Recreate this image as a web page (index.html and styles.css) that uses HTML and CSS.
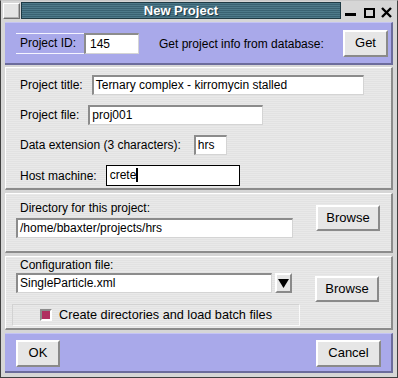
FILE: index.html
```html
<!DOCTYPE html>
<html lang="en">
<head>
    <meta charset="UTF-8">
    <title>New Project</title>
    <link rel="stylesheet" href="styles.css">
</head>
<body>
    <div class="window">
        <div class="titlebar">
            <div class="tb-icon"></div>
            <div class="tb-title">New Project</div>
            <svg class="tb-controls" width="54" height="18" viewBox="0 0 54 18">
                <rect x="4" y="11" width="11" height="3" fill="#000"/>
                <rect x="24" y="7" width="9" height="8" fill="none" stroke="#000" stroke-width="2"/>
                <path d="M41 6 L50 15 M50 6 L41 15" stroke="#000" stroke-width="2.4"/>
            </svg>
        </div>

        <div class="panel panel-top">
            <span class="id-label">Project ID:</span>
            <div class="field w-id">145</div>
            <span class="get-text">Get project info from database:</span>
            <div class="spacer"></div>
            <div class="btn w-get">Get</div>
        </div>

        <div class="section section-info">
            <div class="row">
                <span>Project title:</span>
                <div class="field w-title">Ternary complex - kirromycin stalled</div>
            </div>
            <div class="row">
                <span>Project file:</span>
                <div class="field w-file">proj001</div>
            </div>
            <div class="row">
                <span>Data extension (3 characters):</span>
                <div class="field w-ext">hrs</div>
            </div>
            <div class="row">
                <span>Host machine:</span>
                <div class="field field-focus w-host">crete<span class="caret"></span></div>
            </div>
        </div>

        <div class="section section-dir">
            <div class="col">
                <span class="sub-label">Directory for this project:</span>
                <div class="field w-dir">/home/bbaxter/projects/hrs</div>
            </div>
            <div class="btn w-browse browse-dir">Browse</div>
        </div>

        <div class="section section-conf">
            <div class="conf-top">
                <div class="col">
                    <span class="sub-label">Configuration file:</span>
                    <div class="combo">
                        <div class="field w-conf">SingleParticle.xml</div>
                        <div class="drop-btn">
                            <svg width="11" height="9" viewBox="0 0 11 9"><path d="M0 0 H11 L5.5 9 Z" fill="#000"/></svg>
                        </div>
                    </div>
                </div>
                <div class="btn w-browse browse-conf">Browse</div>
            </div>
            <div class="check-box">
                <span class="check"></span>
                <span>Create directories and load batch files</span>
            </div>
        </div>

        <div class="panel panel-bottom">
            <div class="btn w-ok">OK</div>
            <div class="btn w-cancel">Cancel</div>
        </div>
    </div>
</body>
</html>
```

FILE: styles.css
```css
body {
    margin: 0;
    font-family: "Liberation Sans", Arial, sans-serif;
    font-size: 12px;
    color: #000;
}
.window {
    width: 398px;
    height: 378px;
    box-sizing: border-box;
    background-color: #d6d6d6;
    border: 1px solid #404040;
    border-top-color: #c8c8c8;
    padding: 1px 4px 4px 4px;
    display: flex;
    flex-direction: column;
}
.titlebar {
    height: 18px;
    margin: 0 -2px 2px -2px;
    display: flex;
}
.tb-icon {
    width: 17px;
    height: 16px;
    margin-top: 1px;
    box-sizing: border-box;
    background-color: #e4e4e4;
    border: 1px solid;
    border-color: #fff #707070 #707070 #fff;
    box-shadow: inset -1px -1px 0 #b0b0b0;
}
.tb-title {
    flex: 1;
    margin-left: 1px;
    height: 17px;
    box-sizing: border-box;
    border: 1px solid #1e3a44;
    background: repeating-linear-gradient(to bottom, #4e7a8a 0, #4e7a8a 1px, #3a6272 1px, #3a6272 2px);
    color: #fff;
    font-weight: bold;
    font-size: 13px;
    line-height: 15px;
    text-align: center;
    text-shadow: 1px 1px 0 #1e3a44;
}
.tb-controls {
    display: block;
}
.panel {
    background-color: #a9a9ea;
    box-sizing: border-box;
    border-style: solid;
    border-width: 1px 2px 2px 0;
    border-color: #c4c4f4 #6c6c9c #6c6c9c #c4c4f4;
    display: flex;
}
.panel-top {
    height: 43px;
    align-items: center;
    padding: 1px 3px 0 11px;
}
.panel-bottom {
    height: 40px;
    margin-top: 3px;
    justify-content: space-between;
    align-items: flex-start;
    padding: 6px 10px 0 11px;
}
.id-label {
    border-top: 1px solid #f4f4ff;
    border-bottom: 1px solid #f4f4ff;
    line-height: 19px;
    padding: 0 8px 0 4px;
}
.get-text {
    margin-left: 20px;
}
.spacer {
    flex: 1;
}
.field {
    height: 20px;
    box-sizing: border-box;
    background-color: #fff;
    border-style: solid;
    border-width: 2px 1px 1px 2px;
    border-color: #8c8c8c #d4d4d4 #d4d4d4 #8c8c8c;
    padding-left: 2px;
    line-height: 17px;
    white-space: nowrap;
    overflow: hidden;
}
.field-focus {
    height: 21px;
    border: 1px solid #000;
    padding-left: 3px;
    line-height: 19px;
}
.caret {
    display: inline-block;
    width: 2px;
    height: 14px;
    background-color: #000;
    vertical-align: -3px;
}
.w-id { width: 55px; height: 21px; padding-left: 4px; line-height: 18px; }
.w-title { width: 272px; }
.w-file { width: 175px; }
.w-ext { width: 33px; margin-left: 4px; }
.w-host { width: 134px; }
.w-dir { width: 277px; }
.w-conf { width: 256px; }
.btn {
    height: 27px;
    box-sizing: border-box;
    background-color: #e6e6e6;
    border: 2px solid;
    border-color: #fff #8a8a8a #8a8a8a #fff;
    text-align: center;
    line-height: 22px;
    font-size: 13px;
}
.w-get { width: 45px; }
.w-browse { width: 64px; height: 26px; }
.w-ok { width: 44px; }
.w-cancel { width: 65px; }
.section {
    box-sizing: border-box;
    background: repeating-linear-gradient(to bottom, #e9e9e9 0, #e9e9e9 1px, #e2e2e2 1px, #e2e2e2 2px);
    border-style: solid;
    border-width: 1px 2px 2px 1px;
    border-color: #fff #8c8c8c #8c8c8c #fff;
}
.section-info {
    height: 123px;
    margin-top: 2px;
    padding: 7px 0 0 14px;
    display: flex;
    flex-direction: column;
    gap: 10px;
}
.row {
    display: flex;
    align-items: center;
    gap: 9px;
}
.section-dir {
    height: 60px;
    margin-top: 3px;
    padding: 7px 0 0 10px;
    display: flex;
}
.col {
    display: flex;
    flex-direction: column;
}
.sub-label {
    line-height: 15px;
    padding-left: 4px;
    margin-bottom: 2px;
}
.browse-dir {
    margin: 4px 0 0 23px;
}
.section-conf {
    height: 74px;
    margin-top: 3px;
    padding: 1px 0 0 10px;
}
.section-conf .sub-label {
    margin-bottom: 0;
}
.conf-top {
    display: flex;
}
.browse-conf {
    margin: 18px 0 0 23px;
}
.combo {
    display: flex;
    gap: 3px;
}
.drop-btn {
    width: 17px;
    height: 20px;
    box-sizing: border-box;
    background-color: #e6e6e6;
    border: 2px solid;
    border-color: #fff #8a8a8a #8a8a8a #fff;
    display: flex;
    align-items: center;
    justify-content: center;
}
.drop-btn svg {
    display: block;
}
.check-box {
    width: 288px;
    height: 22px;
    margin: 2px 0 0 -4px;
    box-sizing: border-box;
    border: 1px solid;
    border-color: #d2d2d2 #fafafa #fafafa #d2d2d2;
    display: flex;
    align-items: center;
    gap: 7px;
    padding-left: 27px;
    font-size: 12.7px;
}
.check {
    width: 12px;
    height: 12px;
    box-sizing: border-box;
    background-color: #b03060;
    border: 2px solid;
    border-color: #8c8c8c #fff #fff #8c8c8c;
}
```
